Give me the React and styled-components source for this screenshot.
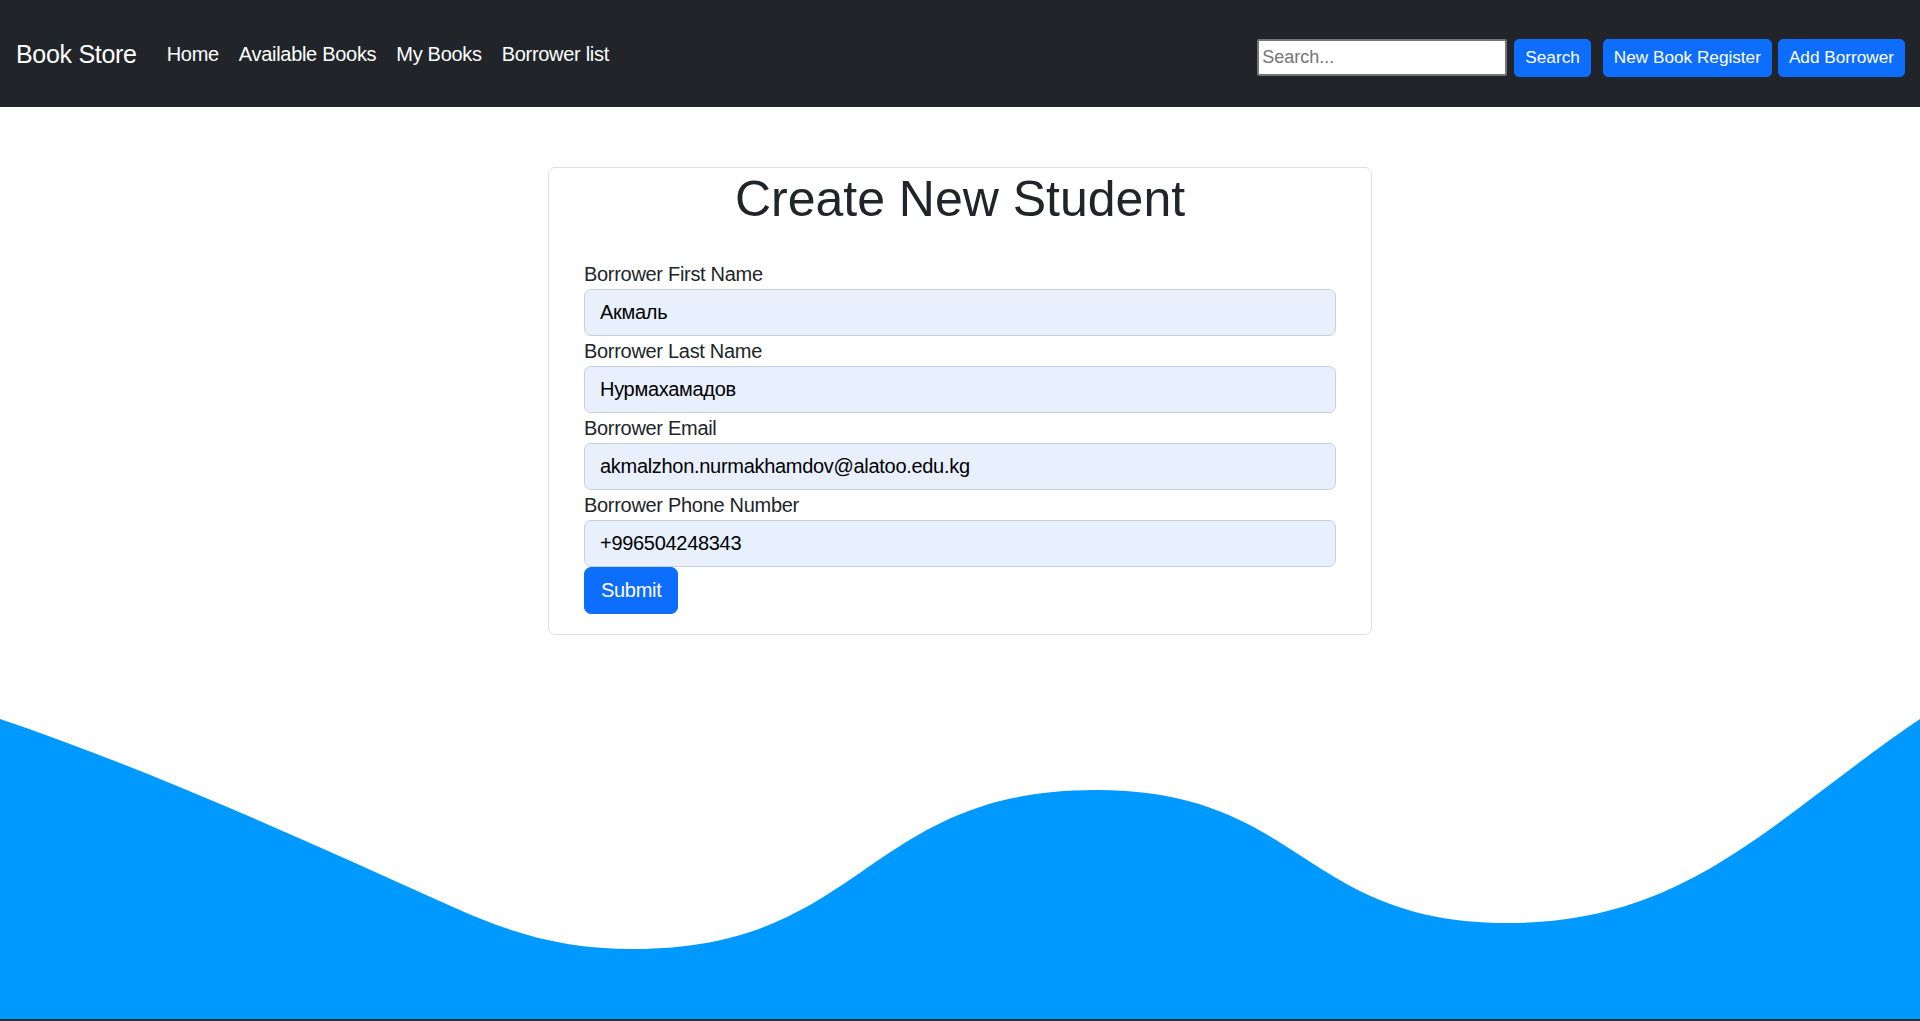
import React from "react";
import styled, { createGlobalStyle } from "styled-components";

const GlobalStyle = createGlobalStyle`
  html, body {
    margin: 0;
    padding: 0;
    background: #ffffff;
    font-family: "Liberation Sans", Arial, sans-serif;
    color: #212529;
  }
  * { box-sizing: border-box; }
`;

const Page = styled.div`
  min-height: 100vh;
  display: flex;
  flex-direction: column;
`;

const Navbar = styled.nav`
  height: 107px;
  background: #212529;
  display: flex;
  align-items: center;
  padding: 0 15px 0 16px;
`;

const Brand = styled.a`
  color: #ffffff;
  font-size: 25px;
  text-decoration: none;
  margin-right: 20px;
  letter-spacing: -0.3px;
  padding-top: 2px;
`;

const NavList = styled.div`
  display: flex;
  align-items: center;
  padding-top: 2px;
`;

const NavLink = styled.a`
  color: #ffffff;
  font-size: 20px;
  padding: 0 10px;
  text-decoration: none;
  letter-spacing: -0.3px;
`;

const RightGroup = styled.div`
  margin-left: auto;
  display: flex;
  align-items: center;
  padding-top: 8px;
`;

const SearchForm = styled.form`
  display: flex;
  align-items: center;
  gap: 7px;
  margin-right: 12px;
`;

const SearchInput = styled.input`
  width: 250px;
  height: 37px;
  border: 2px solid #767676;
  border-radius: 2px;
  padding: 0 3px;
  font-family: inherit;
  font-size: 18px;
  background: #ffffff;
  color: #212529;
  &::placeholder { color: #757575; }
`;

const SmallButton = styled.button`
  height: 38px;
  padding: 0 10px;
  background: #0d6efd;
  color: #ffffff;
  border: 1px solid #0d6efd;
  border-radius: 5px;
  font-family: inherit;
  font-size: 17.2px;
  margin-left: ${(p) => (p.$gap ? p.$gap : 0)}px;
  cursor: pointer;
`;

const Main = styled.main`
  flex: 1;
  display: flex;
  justify-content: center;
  align-items: flex-start;
  padding-top: 60px;
`;

const Card = styled.div`
  width: 824px;
  border: 1px solid #dcdfe3;
  border-radius: 7px;
  padding: 0 35px 20px;
  background: #ffffff;
`;

const Title = styled.h1`
  margin: 0 0 30px;
  font-size: 50px;
  font-weight: 400;
  line-height: 60px;
  text-align: center;
  color: #212529;
  padding-top: 1px;
`;

const Field = styled.div`
  display: flex;
  flex-direction: column;
`;

const Label = styled.label`
  font-size: 20px;
  line-height: 30px;
  color: #212529;
  letter-spacing: -0.3px;
`;

const TextInput = styled.input`
  width: 100%;
  height: 47px;
  padding: 0 15px;
  border: 1px solid #c9d0d8;
  border-radius: 7px;
  background: #e8f0fe;
  font-family: inherit;
  font-size: 20px;
  color: #000000;
  letter-spacing: -0.3px;
`;

const SubmitButton = styled.button`
  height: 47px;
  padding: 0 16px;
  background: #0d6efd;
  border: 1px solid #0d6efd;
  border-radius: 7px;
  color: #ffffff;
  font-family: inherit;
  font-size: 20px;
  letter-spacing: -0.3px;
  align-self: flex-start;
  cursor: pointer;
`;

const Form = styled.form`
  display: flex;
  flex-direction: column;
`;

const WaveBox = styled.div`
  height: 319px;
  line-height: 0;
`;

const WaveSvg = styled.svg`
  display: block;
  width: 100%;
  height: 319px;
`;

const FooterLine = styled.div`
  height: 2px;
  background: #22323e;
`;

const fields = [
  { label: "Borrower First Name", value: "Акмаль" },
  { label: "Borrower Last Name", value: "Нурмахамадов" },
  { label: "Borrower Email", value: "akmalzhon.nurmakhamdov@alatoo.edu.kg" },
  { label: "Borrower Phone Number", value: "+996504248343" },
];

export default function App() {
  return (
    <Page>
      <GlobalStyle />
      <Navbar>
        <Brand href="#">Book Store</Brand>
        <NavList>
          <NavLink href="#">Home</NavLink>
          <NavLink href="#">Available Books</NavLink>
          <NavLink href="#">My Books</NavLink>
          <NavLink href="#">Borrower list</NavLink>
        </NavList>
        <RightGroup>
          <SearchForm onSubmit={(e) => e.preventDefault()}>
            <SearchInput placeholder="Search..." />
            <SmallButton type="submit">Search</SmallButton>
          </SearchForm>
          <SmallButton type="button">New Book Register</SmallButton>
          <SmallButton type="button" $gap={6}>Add Borrower</SmallButton>
        </RightGroup>
      </Navbar>
      <Main>
        <Card>
          <Title>Create New Student</Title>
          <Form onSubmit={(e) => e.preventDefault()}>
            {fields.map((f) => (
              <Field key={f.label}>
                <Label>{f.label}</Label>
                <TextInput defaultValue={f.value} />
              </Field>
            ))}
            <SubmitButton type="submit">Submit</SubmitButton>
          </Form>
        </Card>
      </Main>
      <WaveBox>
        <WaveSvg viewBox="0 0 1920 319" preserveAspectRatio="none">
          <path
            fill="#0099ff"
            d="M0,19 C151,70 302,139 453,207 C513,234 564,249 634,249 C865,249 865,90 1096,90 C1302,90 1302,223 1508,223 C1688,223 1770,121 1920,19 L1920,319 L0,319 Z"
          />
        </WaveSvg>
      </WaveBox>
      <FooterLine />
    </Page>
  );
}
